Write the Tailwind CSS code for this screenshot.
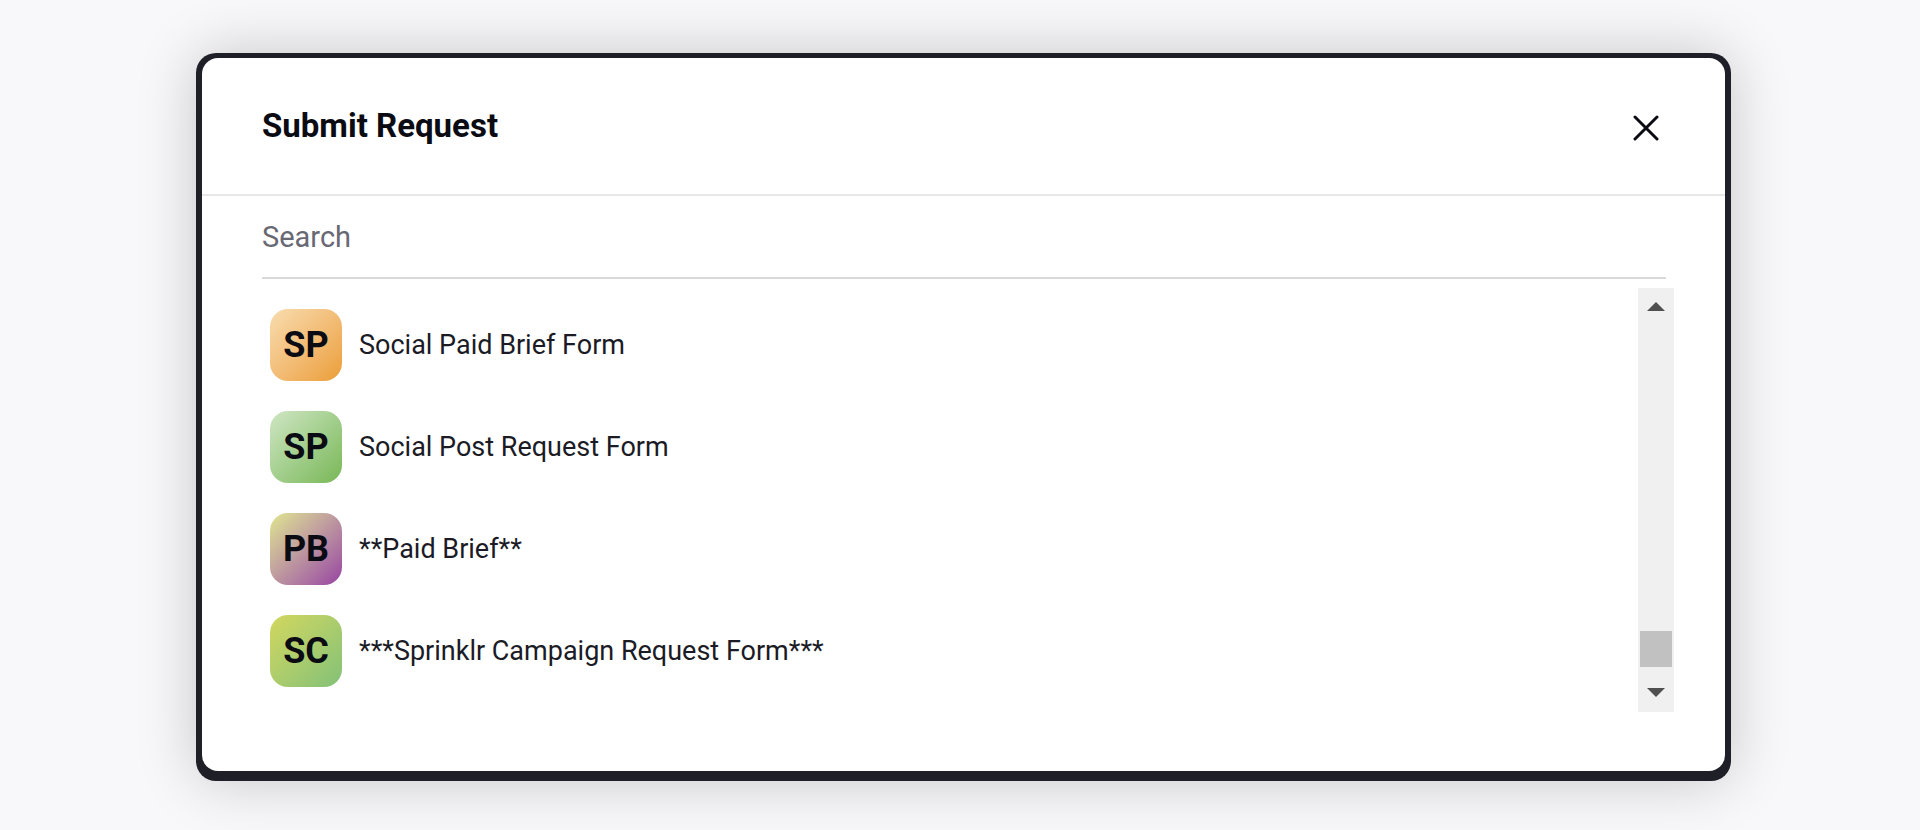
<!DOCTYPE html>
<html lang="en">
<head>
    <meta charset="UTF-8">
    <meta name="viewport" content="width=device-width, initial-scale=1.0">
    <title>Submit Request</title>
    <script src="https://cdn.jsdelivr.net/npm/@tailwindcss/browser@4"></script>
</head>
<body class="bg-[#f8f8fa] min-h-screen pt-[53px] pb-12 pl-[196px] pr-[189px] font-['Roboto',sans-serif] text-[#0b0b14]">
    <div role="dialog" aria-labelledby="dialog-title" class="bg-[#1f1f28] rounded-[20px] pt-[5px] px-[6px] pb-[10px] shadow-[0_0_60px_rgba(0,0,0,0.2)]">
        <div class="bg-white rounded-[16px] pb-[59px]">
            <header class="flex items-center justify-between h-[138px] px-[60px] border-b-2 border-[#e7e7e9]">
                <h1 id="dialog-title" class="text-[33px] leading-10 font-bold">Submit Request</h1>
                <button type="button" aria-label="Close" class="px-[6px] pt-1">
                    <svg class="w-[26px] h-[26px]" viewBox="0 0 26 26" fill="none" stroke="currentColor" stroke-width="3" stroke-linecap="round">
                        <path d="M2 2l22 22M24 2L2 24"/>
                    </svg>
                </button>
            </header>

            <div class="pl-[60px] pr-[59px]">
                <input type="text" id="search" placeholder="Search" aria-label="Search"
                    class="block w-full h-[83px] border-b-2 border-[#d9d9db] text-[29px] placeholder:text-[#686874] outline-none">
            </div>

            <div class="flex justify-between mt-[9px] pl-[68px] pr-[51px] h-[424px]">
                <ul class="flex flex-col gap-[30px] pt-[21px] text-[27px] leading-9 text-[#1b1b26]">
                    <li class="flex items-center gap-[17px]">
                        <span class="flex items-center justify-center size-[72px] rounded-[18px] bg-linear-135 from-[#f8dcae] to-[#eb9e33] text-[36px] font-bold text-[#0b0b14]">SP</span>
                        <a href="#">Social Paid Brief Form</a>
                    </li>
                    <li class="flex items-center gap-[17px]">
                        <span class="flex items-center justify-center size-[72px] rounded-[18px] bg-linear-135 from-[#cfe6c3] to-[#78b755] text-[36px] font-bold text-[#0b0b14]">SP</span>
                        <a href="#">Social Post Request Form</a>
                    </li>
                    <li class="flex items-center gap-[17px]">
                        <span class="flex items-center justify-center size-[72px] rounded-[18px] bg-linear-135 from-[#e0e68e] to-[#97419f] text-[36px] font-bold text-[#0b0b14]">PB</span>
                        <a href="#">**Paid Brief**</a>
                    </li>
                    <li class="flex items-center gap-[17px]">
                        <span class="flex items-center justify-center size-[72px] rounded-[18px] bg-linear-135 from-[#d2d75e] to-[#82c177] text-[36px] font-bold text-[#0b0b14]">SC</span>
                        <a href="#">***Sprinklr Campaign Request Form***</a>
                    </li>
                </ul>

                <!-- scrollbar -->
                <div class="flex flex-col w-9 bg-[#f0f0f0]">
                    <button type="button" aria-label="Scroll up" class="flex items-end justify-center h-9 pb-[13px]">
                        <svg class="w-[18px] h-[9px]" viewBox="0 0 18 9" fill="#505050"><path d="M0 9L9 0l9 9z"/></svg>
                    </button>
                    <div class="flex-1 flex flex-col justify-end px-[2px] pb-[9px]">
                        <div class="h-9 bg-[#c1c1c1]"></div>
                    </div>
                    <button type="button" aria-label="Scroll down" class="flex items-start justify-center h-9 pt-3">
                        <svg class="w-[18px] h-[9px]" viewBox="0 0 18 9" fill="#505050"><path d="M0 0l9 9 9-9z"/></svg>
                    </button>
                </div>
            </div>
        </div>
    </div>
</body>
</html>
